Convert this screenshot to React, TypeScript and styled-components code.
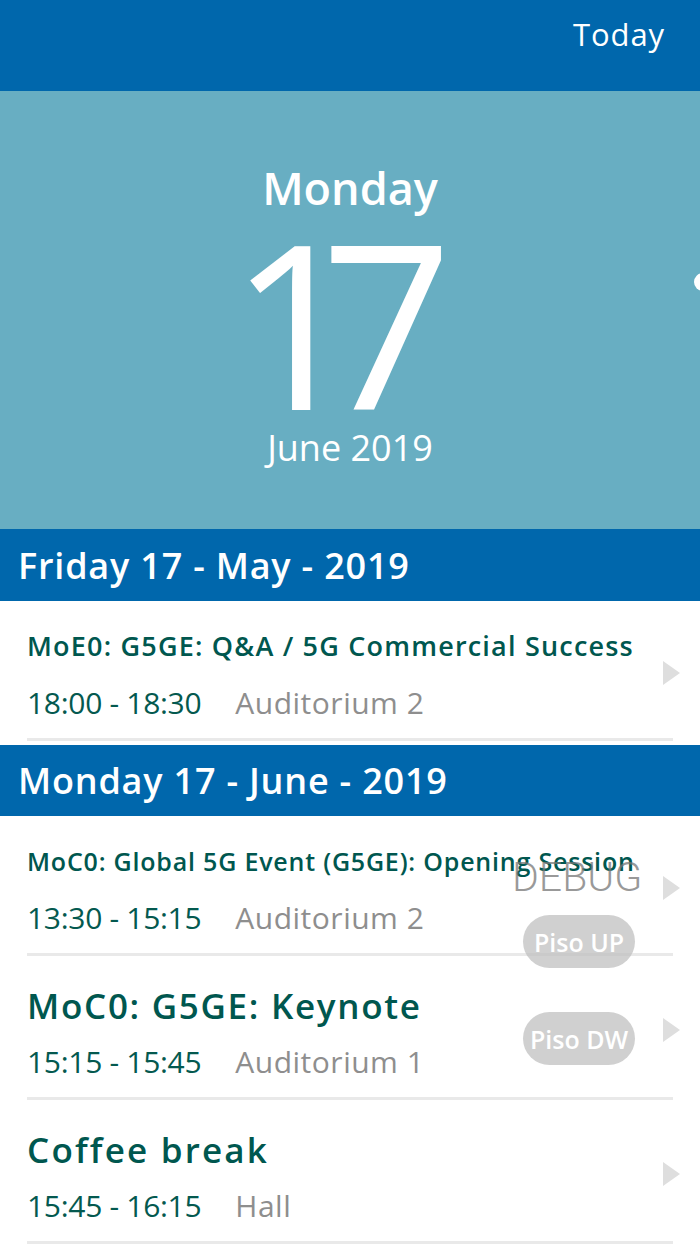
import React from "react";
import styled, { createGlobalStyle } from "styled-components";

const Global = createGlobalStyle`
  html, body { margin: 0; padding: 0; background: #ffffff; }
  body { font-family: "Open Sans", "Noto Sans", sans-serif; }
  * { box-sizing: border-box; }
`;

const Screen = styled.div`
  position: relative;
  width: 700px;
  height: 1244px;
  overflow: hidden;
  background: #ffffff;
  display: flex;
  flex-direction: column;
`;

const TopBar = styled.header`
  height: 91px;
  background: #0067ac;
  display: flex;
  justify-content: flex-end;
  align-items: flex-start;
  padding: 13px 35px 0 0;
`;

const TodayButton = styled.span`
  color: #ffffff;
  font-size: 31px;
  line-height: 42px;
  font-weight: 400;
  letter-spacing: 0.9px;
`;

const Hero = styled.section`
  position: relative;
  height: 438px;
  background: #68aec2;
  display: flex;
  flex-direction: column;
  align-items: center;
  color: #ffffff;
  padding-top: 68px;
`;

const DayName = styled.div`
  font-size: 45px;
  line-height: 58px;
  font-weight: 600;
`;

const DayNumber = styled.div`
  font-size: 230px;
  line-height: 170px;
  font-weight: 500;
  letter-spacing: -40px;
  margin-top: 19px;
  margin-right: 58px;
`;

const MonthYear = styled.div`
  font-size: 36px;
  line-height: 44px;
  font-weight: 400;
  margin-top: 20px;
`;

const PeekDot = styled.span`
  position: absolute;
  right: -12px;
  top: 182px;
  width: 18px;
  height: 18px;
  border-radius: 50%;
  background: #ffffff;
`;

const SectionHeader = styled.div<{ $h: number }>`
  height: ${(p) => p.$h}px;
  background: #0067ac;
  color: #ffffff;
  display: flex;
  align-items: center;
  padding-left: 18px;
  font-size: 36px;
  font-weight: 600;
  letter-spacing: 0.8px;
`;

const Group = styled.div<{ $pb: number }>`
  padding-bottom: ${(p) => p.$pb}px;
`;

const Row = styled.div<{ $h: number }>`
  height: ${(p) => p.$h}px;
  display: flex;
  align-items: center;
  padding: 0 20px 0 27px;
`;

const Content = styled.div<{ $big: boolean }>`
  flex: 1;
  display: flex;
  flex-direction: column;
  align-self: flex-start;
  padding-top: ${(p) => (p.$big ? 30 : 27)}px;
  gap: ${(p) => (p.$big ? 15 : 18)}px;
`;

const Title = styled.div<{ $big: boolean; $size: number; $ls: number }>`
  color: #00574f;
  font-size: ${(p) => p.$size}px;
  line-height: ${(p) => (p.$big ? 40 : 36)}px;
  letter-spacing: ${(p) => p.$ls}px;
  font-weight: 600;
  white-space: nowrap;
`;

const Meta = styled.div`
  display: flex;
  align-items: center;
  height: 40px;
  gap: 34px;
  font-size: 30px;
`;

const Time = styled.span`
  color: #04594f;
  font-weight: 400;
  letter-spacing: -0.3px;
`;

const Place = styled.span`
  color: #8e8e8e;
  font-weight: 400;
  letter-spacing: 0.5px;
`;

const Chevron = styled.span`
  width: 0;
  height: 0;
  border-top: 12px solid transparent;
  border-bottom: 12px solid transparent;
  border-left: 17px solid #dedede;
  margin-top: 6px;
`;

const Divider = styled.div`
  height: 3px;
  margin: 0 27px;
  background: #e9e9e9;
`;

const DebugLabel = styled.div`
  position: absolute;
  left: 512px;
  top: 853px;
  font-family: Roboto, "Liberation Sans", sans-serif;
  font-weight: 300;
  font-size: 41px;
  line-height: 48px;
  color: rgba(120, 120, 120, 0.75);
`;

const DebugButton = styled.div<{ $top: number }>`
  position: absolute;
  left: 523px;
  top: ${(p) => p.$top}px;
  width: 112px;
  height: 53px;
  border-radius: 27px;
  background: rgba(190, 190, 190, 0.72);
  color: #ffffff;
  display: flex;
  align-items: center;
  justify-content: center;
  font-size: 25px;
  font-weight: 600;
`;

type Item = { title: string; time: string; place: string; big?: boolean; size: number; ls: number; h: number };

const groups: { label: string; h: number; pb: number; items: Item[] }[] = [
  {
    label: "Friday 17 - May - 2019",
    h: 72,
    pb: 4,
    items: [
      { title: "MoE0: G5GE: Q&A / 5G Commercial Success", time: "18:00 - 18:30", place: "Auditorium 2", size: 27, ls: 1.2, h: 137 },
    ],
  },
  {
    label: "Monday 17 - June - 2019",
    h: 71,
    pb: 0,
    items: [
      { title: "MoC0: Global 5G Event (G5GE): Opening Session", time: "13:30 - 15:15", place: "Auditorium 2", size: 25, ls: 0.8, h: 137 },
      { title: "MoC0: G5GE: Keynote", time: "15:15 - 15:45", place: "Auditorium 1", big: true, size: 35, ls: 1.7, h: 141 },
      { title: "Coffee break", time: "15:45 - 16:15", place: "Hall", big: true, size: 35, ls: 2.2, h: 141 },
    ],
  },
];

export default function App() {
  return (
    <Screen>
      <Global />
      <TopBar>
        <TodayButton>Today</TodayButton>
      </TopBar>
      <Hero>
        <DayName>Monday</DayName>
        <DayNumber>17</DayNumber>
        <MonthYear>June 2019</MonthYear>
        <PeekDot />
      </Hero>
      {groups.map((g) => (
        <React.Fragment key={g.label}>
          <SectionHeader $h={g.h}>{g.label}</SectionHeader>
          <Group $pb={g.pb}>
            {g.items.map((it) => (
              <React.Fragment key={it.title}>
                <Row $h={it.h}>
                  <Content $big={!!it.big}>
                    <Title $big={!!it.big} $size={it.size} $ls={it.ls}>{it.title}</Title>
                    <Meta>
                      <Time>{it.time}</Time>
                      <Place>{it.place}</Place>
                    </Meta>
                  </Content>
                  <Chevron />
                </Row>
                <Divider />
              </React.Fragment>
            ))}
          </Group>
        </React.Fragment>
      ))}
      <DebugLabel>DEBUG</DebugLabel>
      <DebugButton $top={915}>Piso UP</DebugButton>
      <DebugButton $top={1012}>Piso DW</DebugButton>
    </Screen>
  );
}
